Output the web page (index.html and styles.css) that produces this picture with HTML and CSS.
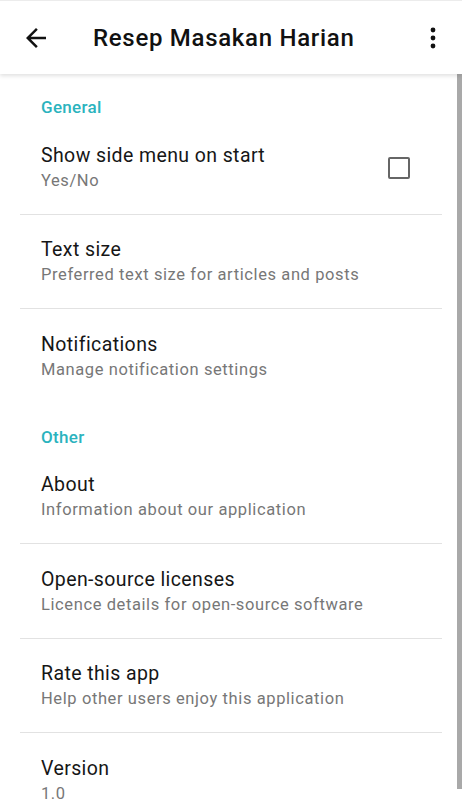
FILE: index.html
```html
<!doctype html>
<html>
<head>
    <meta charset="UTF-8">
    <link rel="stylesheet" href="styles.css">
</head>
<body>
    <div class="screen">
        <header class="appbar">
            <svg class="icon-back" viewBox="0 0 24 24" width="30" height="30">
                <path d="M20 11H7.83l5.59-5.59L12 4l-8 8 8 8 1.41-1.41L7.83 13H20v-2z"/>
            </svg>
            <h1 class="title">Resep Masakan Harian</h1>
            <svg class="icon-more" viewBox="0 0 10 24" width="10" height="24">
                <circle cx="5" cy="4" r="2.4"/>
                <circle cx="5" cy="12" r="2.4"/>
                <circle cx="5" cy="20" r="2.4"/>
            </svg>
        </header>

        <div class="prefs">
            <div class="category">General</div>
            <div class="pref divided">
                <div class="pref-text">
                    <div class="pref-title">Show side menu on start</div>
                    <div class="pref-summary">Yes/No</div>
                </div>
                <span class="checkbox"></span>
            </div>
            <div class="pref divided">
                <div class="pref-text">
                    <div class="pref-title">Text size</div>
                    <div class="pref-summary">Preferred text size for articles and posts</div>
                </div>
            </div>
            <div class="pref">
                <div class="pref-text">
                    <div class="pref-title">Notifications</div>
                    <div class="pref-summary">Manage notification settings</div>
                </div>
            </div>

            <div class="category">Other</div>
            <div class="pref divided">
                <div class="pref-text">
                    <div class="pref-title">About</div>
                    <div class="pref-summary">Information about our application</div>
                </div>
            </div>
            <div class="pref divided">
                <div class="pref-text">
                    <div class="pref-title">Open-source licenses</div>
                    <div class="pref-summary">Licence details for open-source software</div>
                </div>
            </div>
            <div class="pref divided">
                <div class="pref-text">
                    <div class="pref-title">Rate this app</div>
                    <div class="pref-summary">Help other users enjoy this application</div>
                </div>
            </div>
            <div class="pref">
                <div class="pref-text">
                    <div class="pref-title">Version</div>
                    <div class="pref-summary">1.0</div>
                </div>
            </div>
        </div>

        <div class="scrollbar"></div>
    </div>
</body>
</html>
```

FILE: styles.css
```css
* {
    box-sizing: border-box;
}
body {
    margin: 0;
    background-color: #fff;
    font-family: Roboto, "Noto Sans", sans-serif;
}

.screen {
    position: relative;
    width: 462px;
    height: 800px;
    overflow: hidden;
    background-color: #fff;
}

.appbar {
    position: relative;
    z-index: 1;
    height: 74px;
    display: flex;
    align-items: center;
    padding: 0 0 0 21px;
    background-color: #fff;
    border-top: 1px solid #ececec;
    box-shadow: 0 2px 4px rgba(0, 0, 0, 0.12);
}

.icon-back {
    fill: #111;
}

.title {
    margin: 0 0 0 42px;
    flex: 1;
    font-size: 24px;
    font-weight: 500;
    color: #111;
    letter-spacing: 0.7px;
}

.icon-more {
    fill: #111;
    margin-right: 24px;
}

.prefs {
    margin: 0 20px;
}

.category {
    padding: 23px 0 3px 21px;
    line-height: 20px;
    font-size: 17px;
    font-weight: 500;
    letter-spacing: 0.3px;
    color: #2bb3be;
}

.pref {
    display: flex;
    align-items: center;
    padding: 22.5px 32px 21px 21px;
    border-bottom: 1px solid transparent;
}

.pref.divided {
    border-bottom-color: #e2e2e2;
}

.pref-text {
    flex: 1;
}

.pref-title {
    line-height: 26px;
    font-size: 19.5px;
    letter-spacing: 0.4px;
    color: #161616;
}

.pref-summary {
    line-height: 24px;
    font-size: 16.5px;
    letter-spacing: 0.6px;
    color: #777;
}

.checkbox {
    width: 22px;
    height: 22px;
    border: 2px solid #666;
    border-radius: 2px;
}

.scrollbar {
    position: absolute;
    right: 0;
    top: 74px;
    width: 5px;
    height: 715px;
    background-color: #a9a9a9;
}
```
